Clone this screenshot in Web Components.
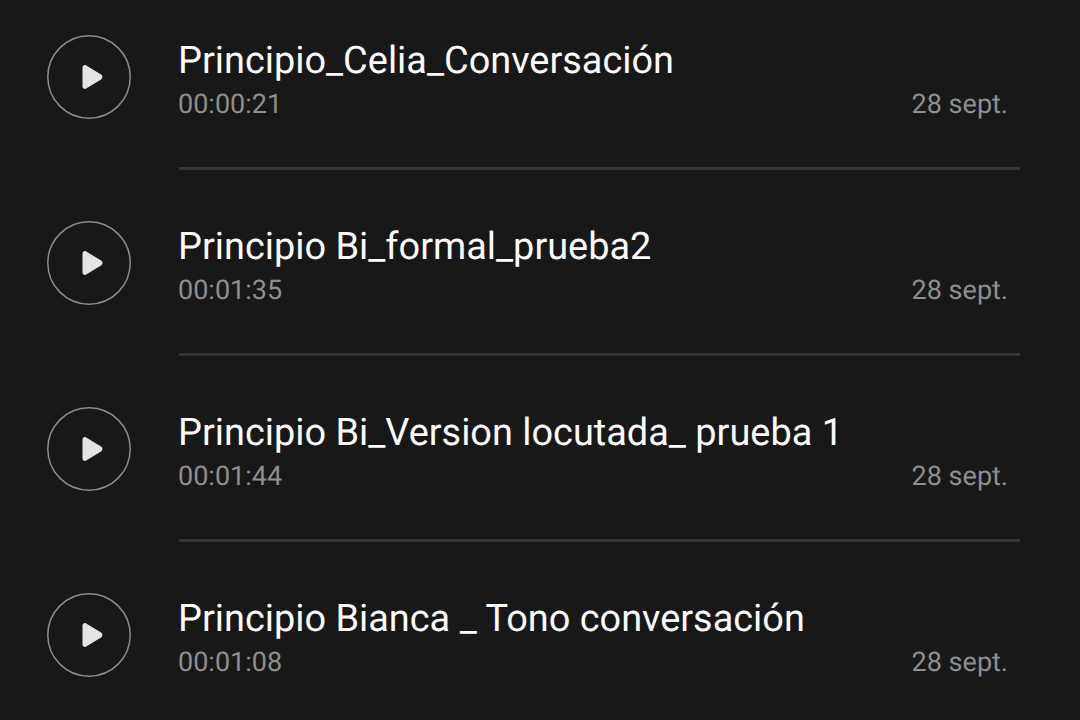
<!DOCTYPE html>
<html lang="es">
<head>
<meta charset="utf-8">
<title>Grabaciones</title>
<style>
  html, body {
    margin: 0;
    height: 100%;
    overflow: hidden;
    background: #181818;
  }
</style>
</head>
<body>
<recording-list>
  <recording-row name="Principio_Celia_Conversación" duration="00:00:21" date="28 sept."></recording-row>
  <recording-row name="Principio Bi_formal_prueba2" duration="00:01:35" date="28 sept."></recording-row>
  <recording-row name="Principio Bi_Version locutada_ prueba 1" duration="00:01:44" date="28 sept."></recording-row>
  <recording-row name="Principio Bianca _ Tono conversación" duration="00:01:08" date="28 sept."></recording-row>
</recording-list>

<script>
  class PlayButton extends HTMLElement {
    constructor() {
      super();
      this.attachShadow({ mode: 'open' }).innerHTML = `
      <style>
        :host {
          display: block;
          width: 84px;
          height: 84px;
          flex: none;
        }
        svg {
          display: block;
        }
      </style>
      <svg width="84" height="84" viewBox="0 0 84 84">
        <circle cx="42" cy="42" r="41.2" fill="none" stroke="#8c8c8c" stroke-width="1.5"/>
        <path fill="#e4e4e4" transform="translate(35.5 30)" d="M0 2.6C0 .6 2-.6 3.7.4l14.9 9.2c1.8 1.1 1.8 3.7 0 4.8L3.7 23.6C2 24.6 0 23.4 0 21.4z"/>
      </svg>
    `;
    }
  }

  class RecordingRow extends HTMLElement {
    constructor() {
      super();
      this.attachShadow({ mode: 'open' });
    }

    connectedCallback() {
      const name = this.getAttribute('name') || '';
      const duration = this.getAttribute('duration') || '';
      const date = this.getAttribute('date') || '';

      this.shadowRoot.innerHTML = `
      <style>
        :host {
          display: grid;
          grid-template-columns: 84px 1fr;
          column-gap: 48px;
          height: 170px;
          box-sizing: border-box;
          padding: 35px 60px 0 47px;
          font-family: Roboto, "Noto Sans", sans-serif;
          text-rendering: geometricPrecision;
        }
        .body {
          display: flex;
          flex-direction: column;
          border-bottom: 3px solid #353535;
          margin-top: -35px;
          padding-top: 36px;
        }
        .name {
          color: #fafafa;
          font-size: 37.9px;
          line-height: 50px;
          margin-left: -1px;
          white-space: nowrap;
        }
        .meta {
          display: flex;
          justify-content: space-between;
          padding-right: 12px;
          margin-top: -1px;
          color: #8e8e8e;
          font-size: 27px;
          line-height: 38px;
        }
        .time {
          margin-left: -1px;
        }
      </style>
      <play-button></play-button>
      <div class="body">
        <div class="name">${name}</div>
        <div class="meta"><span class="time">${duration}</span><span>${date}</span></div>
      </div>
    `;
    }
  }

  class RecordingList extends HTMLElement {
    constructor() {
      super();
      this.attachShadow({ mode: 'open' }).innerHTML = `
      <style>
        :host {
          display: flex;
          flex-direction: column;
          gap: 16px;
        }
      </style>
      <slot></slot>
    `;
    }
  }

  customElements.define('play-button', PlayButton);
  customElements.define('recording-row', RecordingRow);
  customElements.define('recording-list', RecordingList);
</script>
</body>
</html>
